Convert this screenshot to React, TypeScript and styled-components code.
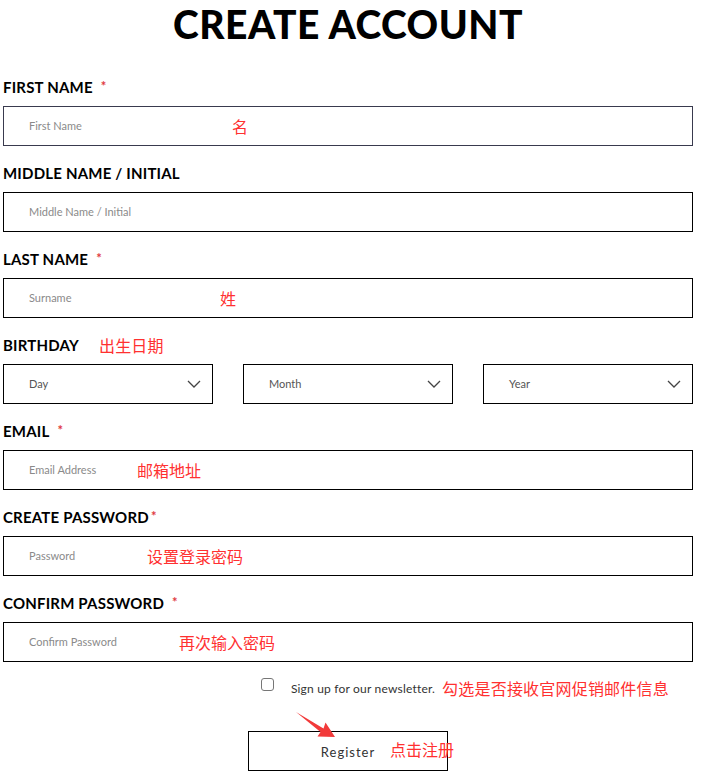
import React from 'react';
import styled, { createGlobalStyle } from 'styled-components';

const GlobalStyle = createGlobalStyle`
  html, body {
    margin: 0;
    padding: 0;
    background: #fff;
  }
  body {
    font-family: Lato, "Liberation Sans", sans-serif;
    color: #111;
  }
`;

const Page = styled.div`
  width: 690px;
  padding: 0 0 20px 3px;
`;

const Title = styled.h1`
  margin: 0 0 31px;
  text-align: center;
  font-family: Lato, "Liberation Sans", sans-serif;
  font-weight: 900;
  font-size: 39px;
  line-height: 48px;
  letter-spacing: 0.5px;
  color: #000;
`;

const Form = styled.form`
  display: flex;
  flex-direction: column;
  gap: 19px;
`;

const Field = styled.div`
  display: flex;
  flex-direction: column;
  gap: 9px;
`;

const Label = styled.label`
  display: flex;
  align-items: center;
  height: 18px;
  font-size: 15px;
  font-weight: 700;
  letter-spacing: 0.2px;
  color: #000;
  margin-top: -1px;
  margin-bottom: 1px;
`;

const Star = styled.span<{ $gap?: number }>`
  color: #e0393e;
  font-size: 13px;
  margin-left: ${({ $gap }) => $gap ?? 8}px;
  align-self: flex-start;
`;

const Note = styled.span`
  font-family: "Noto Sans CJK SC", sans-serif;
  font-weight: 400;
  font-size: 16px;
  color: #ff3030;
  white-space: nowrap;
`;

const InlineNote = styled(Note)`
  margin-left: 20px;
`;

const InputWrap = styled.div`
  position: relative;
`;

const Input = styled.input<{ $dark?: boolean }>`
  box-sizing: border-box;
  width: 100%;
  height: 40px;
  padding: 0 25px 1px;
  border: 1px solid ${({ $dark }) => ($dark ? '#393a4e' : '#000')};
  border-radius: 0;
  font-family: Lato, "Liberation Sans", sans-serif;
  font-size: 11px;
  color: #333;
  outline: none;
  &::placeholder {
    color: #8a8a8a;
  }
`;

const OverNote = styled(Note)<{ $left: number }>`
  position: absolute;
  left: ${({ $left }) => $left}px;
  top: 50%;
  transform: translateY(-52%);
  pointer-events: none;
`;

const SelectRow = styled.div`
  display: grid;
  grid-template-columns: repeat(3, 1fr);
  gap: 30px;
`;

const SelectBox = styled.div`
  box-sizing: border-box;
  height: 40px;
  border: 1px solid #000;
  display: flex;
  align-items: center;
  justify-content: space-between;
  padding: 0 11px 1px 25px;
  font-size: 11px;
  color: #555;
`;

const Newsletter = styled.div`
  margin-top: 16px;
  height: 20px;
  display: flex;
  justify-content: center;
  align-items: center;
  gap: 17px;
`;

const Check = styled.span`
  box-sizing: border-box;
  width: 13px;
  height: 13px;
  border: 1px solid #767676;
  border-radius: 3px;
  margin-top: -7px;
`;

const NewsText = styled.span`
  position: relative;
  font-size: 12px;
  color: #333;
  letter-spacing: 0.2px;
`;

const NewsNote = styled(Note)`
  position: absolute;
  left: calc(100% + 7px);
  top: 50%;
  transform: translateY(-50%);
`;

const ButtonWrap = styled.div`
  position: relative;
  width: 200px;
  margin: 33px auto 0;
`;

const Button = styled.button`
  box-sizing: border-box;
  width: 200px;
  height: 40px;
  background: #fff;
  border: 1px solid #000;
  border-radius: 0;
  font-family: Lato, "Liberation Sans", sans-serif;
  font-size: 13px;
  letter-spacing: 1px;
  color: #333;
  padding-top: 2px;
`;

const ButtonNote = styled(Note)`
  position: absolute;
  left: 142px;
  top: 6px;
`;

const Arrow = styled.svg`
  position: absolute;
  left: 46px;
  top: -22px;
`;

const Chevron = () => (
  <svg width="14" height="8" viewBox="0 0 14 8">
    <path d="M1 1 L7 7 L13 1" fill="none" stroke="#444" strokeWidth="1.3" />
  </svg>
);

type TextFieldProps = {
  label: string;
  placeholder: string;
  required?: boolean;
  starGap?: number;
  note?: string;
  noteLeft?: number;
  dark?: boolean;
};

const TextField = ({ label, placeholder, required, starGap, note, noteLeft = 0, dark }: TextFieldProps) => (
  <Field>
    <Label>
      {label}
      {required && <Star $gap={starGap}>*</Star>}
    </Label>
    <InputWrap>
      <Input placeholder={placeholder} $dark={dark} />
      {note && <OverNote $left={noteLeft}>{note}</OverNote>}
    </InputWrap>
  </Field>
);

const App: React.FC = () => {
  return (
    <Page>
      <GlobalStyle />
      <Title>CREATE ACCOUNT</Title>
      <Form onSubmit={(e) => e.preventDefault()}>
        <TextField label="FIRST NAME" placeholder="First Name" required note="名" noteLeft={229} dark />
        <TextField label="MIDDLE NAME / INITIAL" placeholder="Middle Name / Initial" />
        <TextField label="LAST NAME" placeholder="Surname" required note="姓" noteLeft={217} />
        <Field>
          <Label>
            BIRTHDAY
            <InlineNote>出生日期</InlineNote>
          </Label>
          <SelectRow>
            {['Day', 'Month', 'Year'].map((s) => (
              <SelectBox key={s}>
                {s}
                <Chevron />
              </SelectBox>
            ))}
          </SelectRow>
        </Field>
        <TextField label="EMAIL" placeholder="Email Address" required note="邮箱地址" noteLeft={134} />
        <TextField label="CREATE PASSWORD" placeholder="Password" required starGap={2} note="设置登录密码" noteLeft={144} />
        <TextField label="CONFIRM PASSWORD" placeholder="Confirm Password" required note="再次输入密码" noteLeft={176} />
      </Form>
      <Newsletter>
        <Check />
        <NewsText>
          Sign up for our newsletter.
          <NewsNote>勾选是否接收官网促销邮件信息</NewsNote>
        </NewsText>
      </Newsletter>
      <ButtonWrap>
        <Button type="button">Register</Button>
        <ButtonNote>点击注册</ButtonNote>
        <Arrow width="46" height="32" viewBox="0 0 46 32">
          <polygon points="2,3 29.5,19.5 31.5,13.5 41,28 23.5,27.5 26.5,23" fill="#f23a3a" />
        </Arrow>
      </ButtonWrap>
    </Page>
  );
};

export default App;
